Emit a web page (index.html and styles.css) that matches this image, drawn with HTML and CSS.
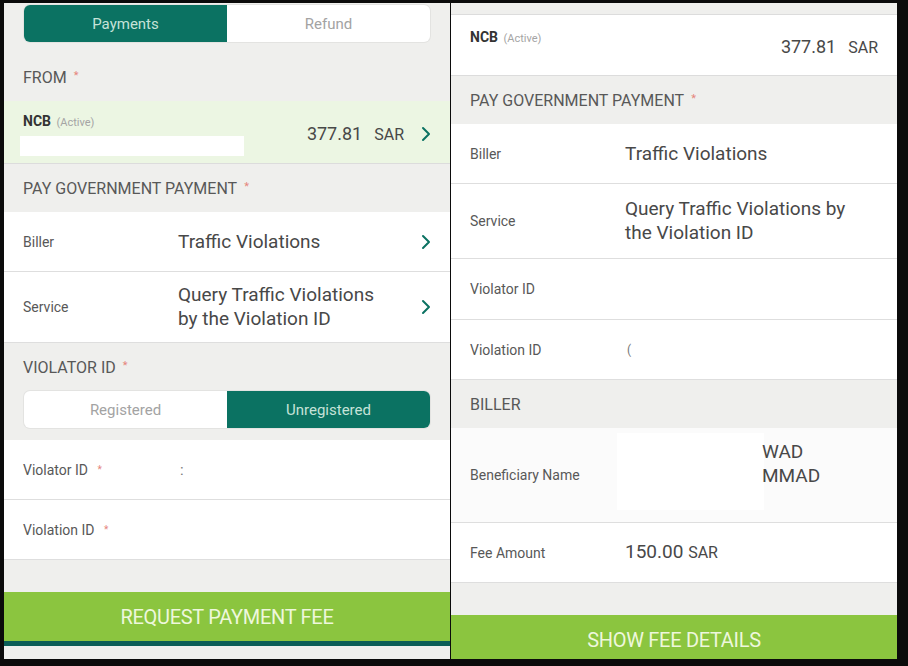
FILE: index.html
```html
<!DOCTYPE html>
<html>
<head>
  <title>Government Payment</title>
  <link rel="stylesheet" href="styles.css">
</head>
<body>
  <div class="screens">

    <section class="phone">
      <div class="tabs-wrap">
        <div class="segmented">
          <span class="seg active">Payments</span>
          <span class="seg">Refund</span>
        </div>
      </div>

      <div class="group-title from">FROM <i class="req">*</i></div>

      <div class="account selected">
        <div class="acc-info">
          <div class="acc-name">NCB <span class="acc-state">(Active)</span></div>
          <div class="redacted"></div>
        </div>
        <div class="acc-amount"><span class="num">377.81</span><span class="cur">SAR</span></div>
        <svg class="chev" viewBox="0 0 10 16"><path d="M2 2 L8 8 L2 14"/></svg>
      </div>

      <div class="group-title">PAY GOVERNMENT PAYMENT <i class="req">*</i></div>

      <div class="row">
        <span class="label">Biller</span>
        <span class="value">Traffic Violations</span>
        <svg class="chev" viewBox="0 0 10 16"><path d="M2 2 L8 8 L2 14"/></svg>
      </div>
      <div class="row tall">
        <span class="label">Service</span>
        <span class="value">Query Traffic Violations<br>by the Violation ID</span>
        <svg class="chev" viewBox="0 0 10 16"><path d="M2 2 L8 8 L2 14"/></svg>
      </div>

      <div class="group-title">VIOLATOR ID <i class="req">*</i></div>
      <div class="tabs-wrap pad-bottom">
        <div class="segmented">
          <span class="seg">Registered</span>
          <span class="seg active">Unregistered</span>
        </div>
      </div>

      <div class="row">
        <span class="label">Violator ID <i class="req">*</i></span>
        <span class="value faint">:</span>
      </div>
      <div class="row">
        <span class="label">Violation ID <i class="req">*</i></span>
      </div>

      <div class="spacer"></div>
      <div class="cta">Request Payment Fee</div>
      <div class="cta-bar"></div>
    </section>

    <section class="phone">
      <div class="top-strip"></div>

      <div class="account">
        <div class="acc-info">
          <div class="acc-name">NCB <span class="acc-state">(Active)</span></div>
        </div>
        <div class="acc-amount"><span class="num">377.81</span><span class="cur">SAR</span></div>
      </div>

      <div class="group-title">PAY GOVERNMENT PAYMENT <i class="req">*</i></div>

      <div class="row">
        <span class="label">Biller</span>
        <span class="value">Traffic Violations</span>
      </div>
      <div class="row taller">
        <span class="label">Service</span>
        <span class="value">Query Traffic Violations by<br>the Violation ID</span>
      </div>
      <div class="row mid">
        <span class="label">Violator ID</span>
      </div>
      <div class="row">
        <span class="label">Violation ID</span>
        <span class="value faint small">(</span>
      </div>

      <div class="group-title">BILLER</div>

      <div class="row beneficiary">
        <span class="label">Beneficiary Name</span>
        <div class="redact-box"></div>
        <div class="name-lines">WAD<br>MMAD</div>
      </div>
      <div class="row">
        <span class="label">Fee Amount</span>
        <span class="value">150.00 <span class="cur">SAR</span></span>
      </div>

      <div class="spacer"></div>
      <div class="cta">Show Fee Details</div>
    </section>

  </div>
</body>
</html>
```

FILE: styles.css
```css
* {
  box-sizing: border-box;
}
body {
  margin: 0;
  background: #0b0b0b;
  font-family: Roboto, "Liberation Sans", sans-serif;
}
.screens {
  display: flex;
  gap: 1px;
  padding: 3px 0 0 4px;
}
.phone {
  width: 446px;
  height: 656px;
  background: #efefed;
  overflow: hidden;
  display: flex;
  flex-direction: column;
}

/* segmented tabs */
.tabs-wrap {
  padding: 2px 20px 0;
}
.tabs-wrap.pad-bottom {
  padding: 0 20px 12px;
}
.segmented {
  display: flex;
  height: 37px;
  border-radius: 6px;
  background: #fff;
  overflow: hidden;
  box-shadow: 0 0 0 1px #e3e3e1;
}
.seg {
  flex: 1;
  display: flex;
  align-items: center;
  justify-content: center;
  font-size: 15px;
  color: #a3a3a3;
}
.seg.active {
  background: #0b7262;
  color: #c6e2d8;
}

/* section headers */
.group-title {
  height: 48px;
  flex-shrink: 0;
  display: flex;
  align-items: center;
  padding-left: 19px;
  font-size: 16px;
  color: #585858;
}
.group-title.from {
  height: 59px;
  padding-top: 11px;
}
.req {
  font-style: normal;
  color: #e5857c;
  font-size: 11px;
  margin-left: 7px;
  position: relative;
  top: -2px;
}

/* account row */
.account {
  display: flex;
  align-items: flex-start;
  height: 61px;
  flex-shrink: 0;
  background: #fff;
  border-bottom: 1px solid #dcdcdc;
  padding: 0 19px;
}
.account.selected {
  height: 63px;
  background: #ecf6e3;
  padding: 0 19px;
}
.top-strip {
  height: 12px;
  flex-shrink: 0;
  border-bottom: 1px solid #dcdcdc;
}
.acc-info {
  flex: 1;
  padding-top: 14px;
}
.selected .acc-info {
  padding-top: 12px;
}
.acc-name {
  font-size: 14px;
  line-height: 16px;
  font-weight: bold;
  color: #333;
}
.acc-state {
  font-size: 11px;
  font-weight: normal;
  color: #a5a5a5;
  margin-left: 2px;
}
.redacted {
  width: 224px;
  height: 20px;
  margin: 5px 0 0 -3px;
  background: #fff;
}
.acc-amount {
  padding-top: 21px;
  line-height: 22px;
  color: #484848;
}
.selected .acc-amount {
  padding-top: 22px;
}
.num {
  font-size: 18px;
}
.cur {
  font-size: 16px;
  margin-left: 12px;
}
.value .cur {
  margin-left: 0;
}
.chev {
  width: 10px;
  height: 16px;
  flex-shrink: 0;
  fill: none;
  stroke: #0b7262;
  stroke-width: 2;
  stroke-linecap: round;
  stroke-linejoin: round;
}
.selected .chev {
  margin: 25px 0 0 17px;
}

/* form rows */
.row {
  display: flex;
  align-items: center;
  height: 60px;
  flex-shrink: 0;
  background: #fff;
  border-bottom: 1px solid #dedede;
  padding: 0 19px 0 19px;
}
.row.tall {
  height: 71px;
}
.row.taller {
  height: 75px;
}
.row.mid {
  height: 61px;
}
.label {
  width: 155px;
  flex-shrink: 0;
  font-size: 14px;
  color: #585858;
}
.label .req {
  font-size: 10px;
  margin-left: 6px;
}
.value {
  flex: 1;
  font-size: 19px;
  line-height: 24px;
  color: #484848;
}
.value.faint {
  color: #777;
  font-size: 15px;
  padding-left: 2px;
}
.value.small {
  font-size: 12px;
}

.row.beneficiary {
  height: 95px;
  align-items: flex-start;
  background: #fbfbfb;
}
.beneficiary .label {
  align-self: center;
}
.redact-box {
  width: 147px;
  height: 77px;
  margin: 5px 0 0 -8px;
  background: #fff;
}
.name-lines {
  margin: 12px 0 0 -2px;
  font-size: 19px;
  line-height: 24px;
  color: #484848;
}

/* bottom */
.spacer {
  height: 32px;
  flex-shrink: 0;
}
.cta {
  height: 49px;
  flex-shrink: 0;
  display: flex;
  align-items: center;
  justify-content: center;
  background: #8bc53f;
  color: #eef7dc;
  font-size: 20px;
  text-transform: uppercase;
  letter-spacing: -0.3px;
}
.cta-bar {
  height: 5px;
  flex-shrink: 0;
  background: #0b5d57;
}
```
